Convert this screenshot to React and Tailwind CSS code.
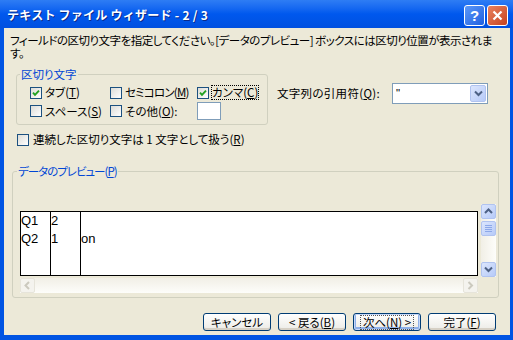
import React from 'react';

const Check = ({ checked }) => (
  <span className="w-[12px] h-[12px] shrink-0 border border-[#1C5180] bg-linear-to-br from-[#DCDCD7] to-white flex items-center justify-center">
    {checked && (
      <svg width="8" height="8" viewBox="0 0 8 8">
        <path d="M1 3.6 L3 5.8 L7 1.6" stroke="#21A121" strokeWidth="1.9" fill="none" />
      </svg>
    )}
  </span>
);

const Opt = ({ checked, label, k, tail = '', focus, tight }) => (
  <div className="flex items-center gap-[3px] whitespace-nowrap">
    <Check checked={checked} />
    <span className={focus ? 'outline-1 outline-dotted outline-black' : tight ? 'tracking-[-0.8px]' : ''}>
      {label}(<u>{k}</u>){tail}
    </span>
  </div>
);

const Chevron = ({ dir = 'down', color = '#4D6185' }) => {
  const d = {
    down: 'M1 1.5 L4.5 5 L8 1.5',
    up: 'M1 5 L4.5 1.5 L8 5',
    left: 'M5 1 L1.5 4.5 L5 8',
    right: 'M1.5 1 L5 4.5 L1.5 8',
  }[dir];
  const side = dir === 'left' || dir === 'right';
  return (
    <svg width={side ? 7 : 9} height={side ? 9 : 7} viewBox={side ? '0 0 7 9' : '0 0 9 7'}>
      <path d={d} stroke={color} strokeWidth="2" fill="none" />
    </svg>
  );
};

const ScrollBtn = ({ dir, disabled }) => (
  <div
    className={
      disabled
        ? 'w-[15px] h-[15px] shrink-0 rounded-[2px] border border-[#E6E4DA] bg-[#F4F3EE] flex items-center justify-center'
        : 'w-[15px] h-[15px] shrink-0 rounded-[2px] border border-[#B0C3F0] bg-linear-to-br from-[#DCE6FD] to-[#B6CAF8] flex items-center justify-center'
    }
  >
    <Chevron dir={dir} color={disabled ? '#CBC9BE' : '#4D6185'} />
  </div>
);

const Button = ({ children, primary }) => (
  <div
    className={
      primary
        ? 'w-[68px] h-[18px] border border-[#003C74] rounded-[3px] bg-linear-to-b from-white to-[#ECEBE6] shadow-[inset_0_0_0_1px_#C6D8F8,inset_0_-1px_0_2px_#8FB0E8] flex items-center justify-center whitespace-nowrap'
        : 'w-[68px] h-[18px] border border-[#003C74] rounded-[3px] bg-linear-to-b from-white to-[#ECEBE6] shadow-[inset_0_-2px_0_#D6D0C5] flex items-center justify-center whitespace-nowrap'
    }
  >
    <span className={primary ? 'px-[2px] outline-1 outline-dotted outline-[#555]' : ''}>{children}</span>
  </div>
);

export default function App() {
  return (
    <div className="w-[513px] h-[340px] flex flex-col overflow-hidden bg-[#0054E3] text-black text-[11.5px] leading-[13px] font-['Noto_Sans_CJK_JP',sans-serif]">
      {/* title bar */}
      <div className="h-[28px] shrink-0 flex items-center pl-[7px] pr-[5px] bg-linear-to-b from-[#2E7DF4] via-[#0058EE] to-[#0050E0]">
        <span className="flex-1 text-white font-bold text-[12px] tracking-[0.25px] [text-shadow:1px_1px_0_#0A2A8A]">
          テキスト ファイル ウィザード - 2 / 3
        </span>
        <div className="flex gap-[2px] mt-[2px]">
          <div className="w-[21px] h-[21px] rounded-[3px] border border-white bg-linear-to-br from-[#5C98F8] to-[#1E5FE0] flex items-center justify-center text-white font-bold text-[15px] font-['Liberation_Sans',sans-serif]">
            ?
          </div>
          <div className="w-[21px] h-[21px] rounded-[3px] border border-white bg-linear-to-br from-[#E9825E] to-[#C5411E] flex items-center justify-center">
            <svg width="11" height="11" viewBox="0 0 11 11">
              <path d="M1.5 1.5 L9.5 9.5 M9.5 1.5 L1.5 9.5" stroke="white" strokeWidth="2.2" />
            </svg>
          </div>
        </div>
      </div>

      {/* body */}
      <div className="flex-1 ml-[4px] mr-[3px] mb-[5px] bg-[#ECE9D8] flex flex-col [font-feature-settings:'palt']">
        <p className="ml-[6px] mt-[6px] whitespace-nowrap tracking-[-0.5px]">
          フィールドの区切り文字を指定してください。[データのプレビュー] ボックスには区切り位置が表示されま
          <br />
          す。
        </p>

        <div className="flex items-start mt-[8px]">
          <fieldset className="ml-[12px] w-[252px] h-[57px] border border-[#D0D0BF] rounded-[3px]">
            <legend className="ml-[3px] px-[1px] text-[#0046D5]">区切り文字</legend>
            <div className="pl-[13px] pt-[5px] grid grid-cols-[80px_87px_auto] gap-y-[3px] items-center">
              <Opt checked label="タブ" k="T" />
              <Opt label="セミコロン" k="M" tight />
              <Opt checked label="カンマ" k="C" focus />
              <Opt label="スペース" k="S" />
              <Opt label="その他" k="O" tail=":" />
              <div className="w-[24px] h-[18px] bg-white border border-[#7F9DB9]" />
            </div>
          </fieldset>

          <div className="ml-[9px] mt-[15px] flex items-center">
            <span className="w-[115px] whitespace-nowrap tracking-[0.3px]">
              文字列の引用符(<u>Q</u>):
            </span>
            <div className="w-[96px] h-[21px] bg-white border border-[#7F9DB9] flex items-stretch p-[1px]">
              <span className="flex-1 pl-[2px] pt-[2px] font-['Liberation_Sans',sans-serif]">"</span>
              <div className="w-[16px] rounded-[2px] border border-[#B0C3F0] bg-linear-to-br from-[#DCE6FD] to-[#B6CAF8] flex items-center justify-center">
                <Chevron dir="down" />
              </div>
            </div>
          </div>
        </div>

        <div className="ml-[13px] mt-[8px] flex items-center gap-[4px] whitespace-nowrap">
          <Check />
          <span>
            連続した区切り文字は 1 文字として扱う(<u>R</u>)
          </span>
        </div>

        <fieldset className="ml-[8px] mt-[19px] w-[487px] h-[133px] border border-[#D0D0BF] rounded-[3px]">
          <legend className="ml-[4px] px-[1px] text-[#0046D5] whitespace-nowrap tracking-[-1px]">
            データのプレビュー(<u>P</u>)
          </legend>
          <div className="pl-[7px] flex items-start">
            <div className="mt-[33px] w-[458px] flex flex-col">
              <div className="h-[65px] border border-black bg-white flex font-['Liberation_Sans',sans-serif] text-[13px] leading-[18px]">
                <div className="w-[30px] border-r border-black overflow-hidden">
                  <div>Q1</div>
                  <div>Q2</div>
                </div>
                <div className="w-[30px] border-r border-black overflow-hidden">
                  <div>2</div>
                  <div>1</div>
                </div>
                <div className="flex-1">
                  <div>&nbsp;</div>
                  <div>on</div>
                </div>
              </div>
              <div className="mt-[2px] h-[15px] flex bg-linear-to-b from-[#F1EFE6] to-[#FDFDFA]">
                <ScrollBtn dir="left" disabled />
                <div className="flex-1" />
                <ScrollBtn dir="right" disabled />
              </div>
            </div>
            <div className="ml-[3px] mt-[26px] w-[15px] h-[73px] flex flex-col bg-linear-to-r from-[#F1EFE6] to-[#FDFDFA]">
              <ScrollBtn dir="up" />
              <div className="mt-[2px] w-[15px] h-[15px] rounded-[2px] border border-[#B0C3F0] bg-linear-to-br from-[#DCE6FD] to-[#B6CAF8] flex flex-col items-center justify-center gap-[1px]">
                <span className="w-[7px] h-[1px] bg-[#8CA8E8]" />
                <span className="w-[7px] h-[1px] bg-[#8CA8E8]" />
                <span className="w-[7px] h-[1px] bg-[#8CA8E8]" />
                <span className="w-[7px] h-[1px] bg-[#8CA8E8]" />
              </div>
              <div className="flex-1" />
              <ScrollBtn dir="down" />
            </div>
          </div>
        </fieldset>

        <div className="mt-[15px] flex justify-end gap-[7px] pr-[14px]">
          <Button>キャンセル</Button>
          <Button>
            &lt; 戻る(<u>B</u>)
          </Button>
          <Button primary>
            次へ(<u>N</u>) &gt;
          </Button>
          <Button>
            完了(<u>F</u>)
          </Button>
        </div>
      </div>
    </div>
  );
}
